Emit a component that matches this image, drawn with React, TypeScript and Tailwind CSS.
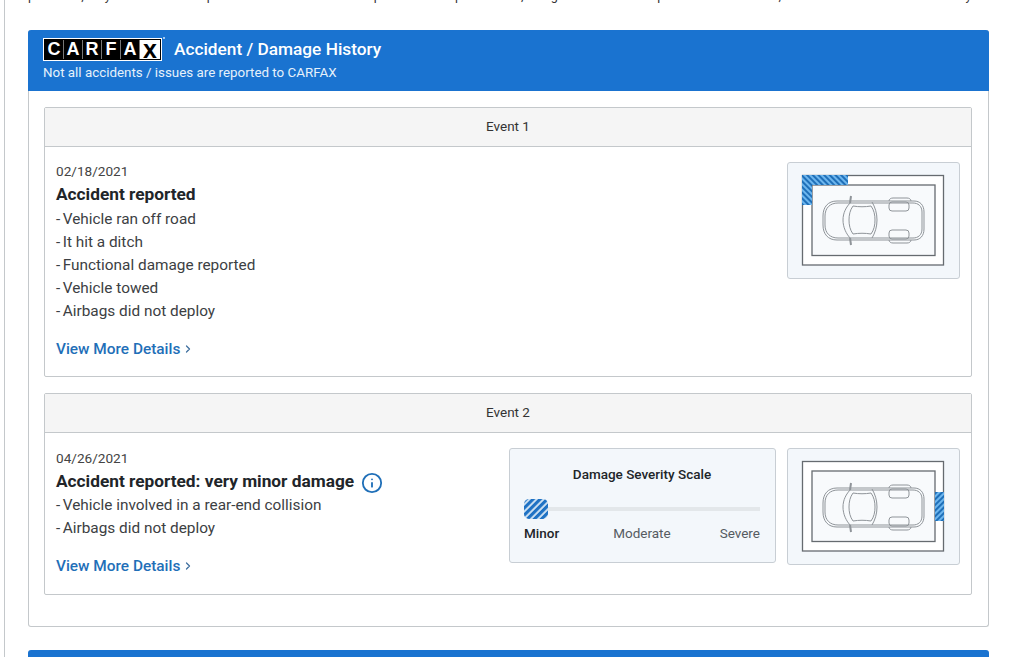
import React from 'react'
import { ChevronRight, Info } from 'lucide-react'

const Hatch = ({ id, angle, size = 4 }: { id: string; angle: number; size?: number }) => (
    <pattern id={id} width={size} height={size} patternUnits="userSpaceOnUse" patternTransform={`rotate(${angle})`}>
        <rect width={size} height={size} fill="#6db6ee" />
        <rect width={size / 2} height={size} fill="#1f6fb8" />
    </pattern>
)

// top view of the truck, coordinates are relative to the 173x117 panel
const CarDiagram = ({ id, zone }: { id: string; zone: 'frontLeft' | 'rear' }) => {
    const y = zone === 'rear' ? 1 : 0
    return (
        <div className="w-[173px] h-[117px] shrink-0 rounded-[3px] border border-[#c8ced4] bg-[#f3f7fb]">
            <svg width="173" height="117" viewBox="0 0 173 117" className="-m-px block">
                <defs>
                    <Hatch id={id} angle={zone === 'rear' ? 45 : -45} />
                </defs>
                <rect x="15.5" y="13.5" width="141" height="89.5" fill="#fff" stroke="#666b70" strokeWidth="1.3" />
                <rect x="25" y="23" width="123" height="70.5" fill="#f8fafc" stroke="#666b70" strokeWidth="1.3" />
                {zone === 'frontLeft' && (
                    <path d="M15 13h46v10H25v20H15z" fill={`url(#${id})`} />
                )}
                {zone === 'rear' && <rect x="148" y="44" width="9" height="29" fill={`url(#${id})`} />}
                <g transform={`translate(0 ${y})`} fill="none" stroke="#8f9499" strokeWidth="1">
                    <path d="M50 39h77c6 0 10 4 10 11v17c0 7-4 11-10 11H50c-9 0-14-6-14-15V54c0-9 5-15 14-15z" />
                    <path d="M51 41h75c5 0 9 3 9 9v17c0 6-4 9-9 9H51c-8 0-13-5-13-13V54c0-8 5-13 13-13z" />
                    <path d="M64 40c-5 5-8 11-8 18s3 14 8 19" />
                    <path d="M66 44c-3 4-4 9-4 14s1 10 4 14" />
                    <path d="M66 44c6 1 12 1 18 0 3 4 4 9 4 14s-1 10-4 14c-6-1-12-1-18 0" />
                    <path d="M85 40c3 5 5 11 5 18s-2 13-5 18" />
                    <path d="M64 34l-1 7M64 83l-1-7" strokeWidth="2" />
                    <path d="M102 39c0-2 2-3 4-3h14c2 0 4 1 4 3M102 78c0 2 2 3 4 3h14c2 0 4-1 4-3" />
                    <rect x="102" y="40" width="20" height="9" rx="3" />
                    <rect x="102" y="68" width="20" height="9" rx="3" />
                </g>
            </svg>
        </div>
    )
}

const SeverityScale = () => (
    <div className="w-[267px] h-[115px] shrink-0 rounded-[3px] border border-[#c8ced4] bg-[#f3f7fb] pl-[14px] pr-[15px] pt-[16px]">
        <div className="text-center text-[13.5px] leading-[18px] font-medium text-[#212529]">Damage Severity Scale</div>
        <div className="mt-[16px] flex items-center">
            <svg width="24" height="20" viewBox="0 0 24 20" className="shrink-0">
                <defs>
                    <pattern id="scaleHatch" width="5" height="5" patternUnits="userSpaceOnUse" patternTransform="rotate(45)">
                        <rect width="5" height="5" fill="#dceaf6" />
                        <rect width="3.2" height="5" fill="#1f72c4" />
                    </pattern>
                </defs>
                <rect width="24" height="20" rx="5" fill="url(#scaleHatch)" />
            </svg>
            <div className="h-1 flex-1 bg-[#e3e7ea]" />
        </div>
        <div className="mt-[4px] flex justify-between text-[13.5px] leading-[20px] text-[#555b61]">
            <span className="font-medium text-[#212529]">Minor</span>
            <span className="ml-[5px]">Moderate</span>
            <span>Severe</span>
        </div>
    </div>
)

const CarfaxLogo = () => (
    <div className="relative mr-[12px]">
        <div className="flex h-[23px] w-[119px] border border-white bg-black p-[1px] font-['Liberation_Sans',sans-serif] text-[18px] leading-[19px] font-bold">
            {['C', 'A', 'R', 'F', 'A'].map((letter, i) => (
                <span key={i} className="w-[19px] border-r border-[#777] text-center text-white">{letter}</span>
            ))}
            <span className="flex-1 bg-white text-center text-[25px] leading-[19px] text-black">x</span>
        </div>
        <span className="absolute -right-[3px] -top-[1px] h-[2px] w-[2px] rounded-full bg-[#cfe2f7]" />
    </div>
)

const ViewMore = () => (
    <a className="flex items-center gap-[2px] text-[15.4px] leading-[24px] font-medium text-[#1f6fb8]">
        View More Details <ChevronRight size={12} strokeWidth={2.5} className="text-[#3f6f9f]" />
    </a>
)

interface EventCardProps {
    title: string;
    date: string;
    heading: React.ReactNode;
    lines: string[];
    bodyHeight: string;
    columnClass?: string;
    children: React.ReactNode;
}

const EventCard: React.FC<EventCardProps> = ({ title, date, heading, lines, bodyHeight, columnClass, children }) => (
    <div className="rounded-[2px] border border-[#c4c8cb]">
        <div className="flex h-[39px] items-center justify-center border-b border-[#c4c8cb] bg-[#f5f5f5] pb-[2px] text-[13.5px] text-[#333]">
            {title}
        </div>
        <div className={`flex justify-between pl-[11px] pr-[11px] pt-[15px] ${bodyHeight}`}>
            <div className={columnClass}>
                <div className="text-[13.6px] leading-[20px] text-[#444]">{date}</div>
                {heading}
                {lines.map(line => (
                    <div key={line} className="text-[15.36px] leading-[23px] text-[#3c4043]">
                        <span className="mr-[2.5px]">-</span>{line}
                    </div>
                ))}
                <div className="mt-[14px]">
                    <ViewMore />
                </div>
            </div>
            <div className="flex items-start gap-[11px]">{children}</div>
        </div>
    </div>
)

export default function App() {
    return (
        <div className="h-[657px] overflow-hidden bg-white font-['Roboto',sans-serif]">
            <div className="ml-1 h-[669px] border-l border-[#c4c8cb] pl-[23px] pr-[35px]">
                <div className="-mt-[12px] whitespace-nowrap text-[12.7px] leading-[16px] text-[#333]">
                    problems, may not have been reported to CARFAX. Use this report as one important tool, along with a vehicle inspection and test drive, to make a better decision about your next used car.
                </div>

                <div className="mt-[26px] rounded-[3px] border border-[#c4c8cb] border-t-0">
                    <div className="-mx-px -mb-px flex h-[61px] flex-col rounded-t-[3px] bg-[#1a73d0] pl-[15px] pt-[8px] text-white">
                        <div className="flex h-[23px] items-center">
                            <CarfaxLogo />
                            <span className="text-[17.25px] font-medium">Accident / Damage History</span>
                        </div>
                        <div className="mt-[2px] text-[13.36px] leading-[20px] text-[#e6f1fb]">Not all accidents / issues are reported to CARFAX</div>
                    </div>
                    <div className="flex flex-col gap-[16px] pl-[15px] pr-[16px] pb-[31px] pt-[17px]">
                        <EventCard
                            title="Event 1"
                            date="02/18/2021"
                            heading={<div className="text-[17.28px] leading-[27px] font-bold text-[#212529]">Accident reported</div>}
                            lines={['Vehicle ran off road', 'It hit a ditch', 'Functional damage reported', 'Vehicle towed', 'Airbags did not deploy']}
                            bodyHeight="h-[229px]"
                            columnClass="-mt-px"
                        >
                            <CarDiagram id="hatchOne" zone="frontLeft" />
                        </EventCard>
                        <EventCard
                            title="Event 2"
                            date="04/26/2021"
                            heading={
                                <div className="flex h-[26px] items-center pt-px text-[17.28px] font-bold text-[#212529]">
                                    Accident reported: very minor damage
                                    <Info size={22} strokeWidth={2} className="ml-[7px] mt-[2px] text-[#1f6fb8]" />
                                </div>
                            }
                            lines={['Vehicle involved in a rear-end collision', 'Airbags did not deploy']}
                            bodyHeight="h-[161px]"
                        >
                            <SeverityScale />
                            <CarDiagram id="hatchTwo" zone="rear" />
                        </EventCard>
                    </div>
                </div>

                <div className="mt-[23px] h-[20px] rounded-t-[3px] bg-[#1a73d0]" />
            </div>
        </div>
    )
}
